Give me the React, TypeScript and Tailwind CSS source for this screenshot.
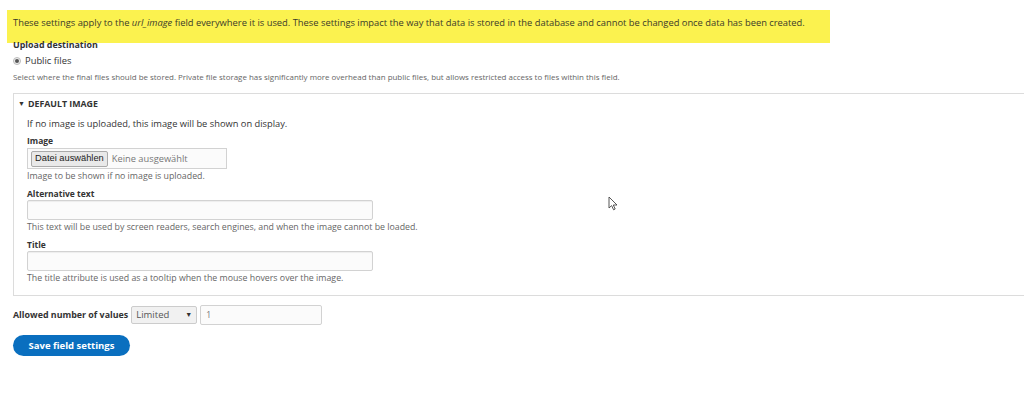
import React from 'react';

const FONT = "font-['Open_Sans','Liberation_Sans',sans-serif]";

function TextInput() {
  return (
    <div className="w-[346px] h-[20px] border border-[#d2d2d2] bg-[#fbfbfb] rounded-[2px] shadow-[inset_0_1px_1px_rgba(0,0,0,0.06)]" />
  );
}

function Cursor() {
  return (
    <svg className="absolute left-[608px] top-[196px]" width="11" height="15" viewBox="0 0 11 15">
      <path d="M1 1 L1 12 L3.6 9.6 L5.6 13.8 L7.2 13 L5.3 9 L9 9 Z" fill="#fff" stroke="#444" strokeWidth="0.9" strokeLinejoin="round" />
    </svg>
  );
}

export default function App() {
  return (
    <div className={`relative h-[399px] bg-white text-[#333] overflow-hidden ${FONT}`}>
      {/* Highlighted notice */}
      <div className="pt-[10px] pl-[7px]">
        <div className="w-[823px] h-[33px] bg-[#fbf24f] pl-[6px] pt-[6px] text-[9.35px] leading-[14px] text-[#3b3b2a] whitespace-nowrap">
          These settings apply to the <em>url_image</em> field everywhere it is used. These settings impact the way that data is stored in the database and cannot be changed once data has been created.
        </div>
      </div>

      <div className="pl-[13px]">
        <div className="-mt-[5px] text-[8.9px] font-bold leading-[14px]">Upload destination</div>

        <label className="mt-[2px] flex items-center gap-[4px] text-[9.4px] leading-[14px]">
          <span className="w-[8px] h-[8px] rounded-full border border-[#bbb] bg-[#eee] flex items-center justify-center">
            <span className="w-[4px] h-[4px] rounded-full bg-[#555]" />
          </span>
          Public files
        </label>

        <p className="mt-[4px] text-[7.95px] leading-[10px] text-[#666] whitespace-nowrap">
          Select where the final files should be stored. Private file storage has significantly more overhead than public files, but allows restricted access to files within this field.
        </p>

        {/* Default image fieldset */}
        <div className="mt-[11px] h-[203px] w-[1030px] border border-[#dcdcdc] pl-[4px] pt-[4px]">
          <div className="flex items-center gap-[3px] text-[8.8px] font-bold leading-[12px] uppercase">
            <span className="text-[7px]">▼</span>
            Default Image
          </div>

          <div className="pl-[9px]">
            <p className="mt-[8px] text-[9.3px] leading-[12px]">If no image is uploaded, this image will be shown on display.</p>

            <div className="mt-[5px] text-[8.5px] font-bold leading-[12px]">Image</div>
            <div className="mt-[1px] w-[200px] h-[21px] border border-[#d2d2d2] bg-[#fbfbfb] flex items-center pl-[3px] gap-[4px]">
              <span className="h-[16px] px-[3px] border border-[#aaa] rounded-[2px] bg-[#e9e9e9] flex items-center text-[9.3px] font-['Liberation_Sans',sans-serif] text-[#222]">
                Datei auswählen
              </span>
              <span className="text-[9.3px] text-[#777]">Keine ausgewählt</span>
            </div>
            <p className="mt-[2px] text-[8.8px] leading-[11px] text-[#666]">Image to be shown if no image is uploaded.</p>

            <div className="mt-[6px] text-[8.5px] font-bold leading-[12px]">Alternative text</div>
            <div><TextInput /></div>
            <p className="mt-[2px] text-[8.8px] leading-[11px] text-[#666]">This text will be used by screen readers, search engines, and when the image cannot be loaded.</p>

            <div className="mt-[6px] text-[8.5px] font-bold leading-[12px]">Title</div>
            <div><TextInput /></div>
            <p className="mt-[2px] text-[8.8px] leading-[11px] text-[#666]">The title attribute is used as a tooltip when the mouse hovers over the image.</p>
          </div>
        </div>

        {/* Allowed number of values */}
        <div className="mt-[9px] flex items-center gap-[3px]">
          <span className="text-[8.9px] font-bold">Allowed number of values</span>
          <div className="w-[66px] h-[18px] border border-[#ccc] bg-[#f1f1f1] rounded-[2px] flex items-center justify-between px-[4px] text-[9.5px] text-[#555]">
            Limited
            <span className="text-[7px] text-[#333]">▼</span>
          </div>
          <div className="w-[122px] h-[20px] border border-[#d2d2d2] bg-[#fbfbfb] rounded-[2px] flex items-center pl-[5px] text-[8.5px] text-[#777]">1</div>
        </div>

        <button className="mt-[10px] w-[117px] h-[21px] rounded-full bg-[#0a6fbf] text-white text-[9.5px] font-bold leading-none">
          Save field settings
        </button>
      </div>

      <Cursor />
    </div>
  );
}
